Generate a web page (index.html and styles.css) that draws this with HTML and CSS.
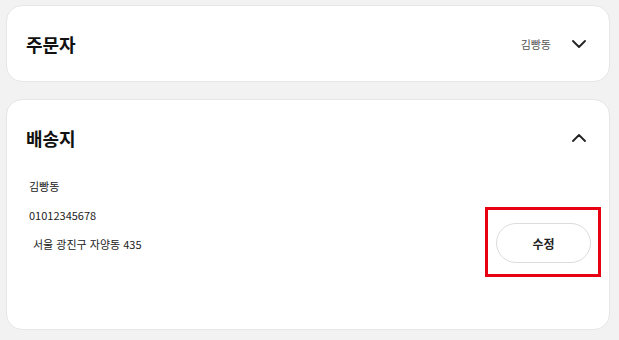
FILE: index.html
```html
<!DOCTYPE html>
<html lang="ko">
<head>
    <meta charset="UTF-8">
    <meta name="viewport" content="width=device-width, initial-scale=1.0">
    <title>주문서</title>
    <link rel="stylesheet" href="styles.css">
</head>
<body>
    <div class="page">
        <section class="card card-orderer">
            <div class="card-head">
                <h2 class="card-title">주문자</h2>
                <div class="head-right">
                    <span class="head-name">김빵동</span>
                    <svg class="chevron" width="14" height="8" viewBox="0 0 14 8">
                        <path d="M1 1 L7 7 L13 1" fill="none" stroke="#222" stroke-width="1.8" stroke-linecap="round" stroke-linejoin="round"/>
                    </svg>
                </div>
            </div>
        </section>

        <section class="card card-delivery">
            <div class="card-head">
                <h2 class="card-title">배송지</h2>
                <div class="head-right">
                    <svg class="chevron" width="14" height="8" viewBox="0 0 14 8">
                        <path d="M1 7 L7 1 L13 7" fill="none" stroke="#222" stroke-width="1.8" stroke-linecap="round" stroke-linejoin="round"/>
                    </svg>
                </div>
            </div>
            <div class="card-body">
                <div class="info">
                    <p class="info-row">김빵동</p>
                    <p class="info-row">01012345678</p>
                    <p class="info-row addr">서울 광진구 자양동 435</p>
                </div>
                <div class="edit-box">
                    <button class="edit-btn">수정</button>
                </div>
            </div>
        </section>
    </div>
</body>
</html>
```

FILE: styles.css
```css
body {
    margin: 0;
    padding: 0;
    background-color: #f2f2f2;
    font-family: "Noto Sans CJK KR", "Noto Sans", sans-serif;
    color: #222;
}
.page {
    padding: 5px 9px 0 6px;
    display: flex;
    flex-direction: column;
    gap: 17px;
}
.card {
    background-color: #fff;
    border: 1px solid #e6e6e6;
    border-radius: 16px;
    box-sizing: border-box;
}
.card-orderer {
    height: 77px;
}
.card-delivery {
    height: 231px;
}
.card-head {
    height: 76px;
    display: flex;
    align-items: center;
    justify-content: space-between;
    padding: 0 23px 0 19px;
}
.card-title {
    margin: 0;
    font-size: 18px;
    font-weight: 700;
    color: #111;
}
.head-right {
    display: flex;
    align-items: center;
    gap: 21px;
}
.head-name {
    font-size: 11px;
    color: #555;
}
.chevron {
    display: block;
}
.card-body {
    display: flex;
    justify-content: space-between;
    padding: 0 8px 0 22px;
}
.info-row {
    margin: 0;
    height: 29px;
    line-height: 20px;
    font-size: 11px;
    color: #222;
}
.addr {
    padding-left: 4px;
}
.edit-box {
    margin-top: 31px;
    align-self: flex-start;
    border: 3px solid #e60012;
    padding: 13px 7px 11px 8px;
}
.edit-btn {
    display: block;
    width: 95px;
    height: 40px;
    border: 1px solid #dcdcdc;
    border-radius: 20px;
    background-color: #fff;
    font-family: "Noto Sans CJK KR", "Noto Sans", sans-serif;
    font-size: 12px;
    font-weight: 700;
    color: #222;
    cursor: pointer;
}
```
